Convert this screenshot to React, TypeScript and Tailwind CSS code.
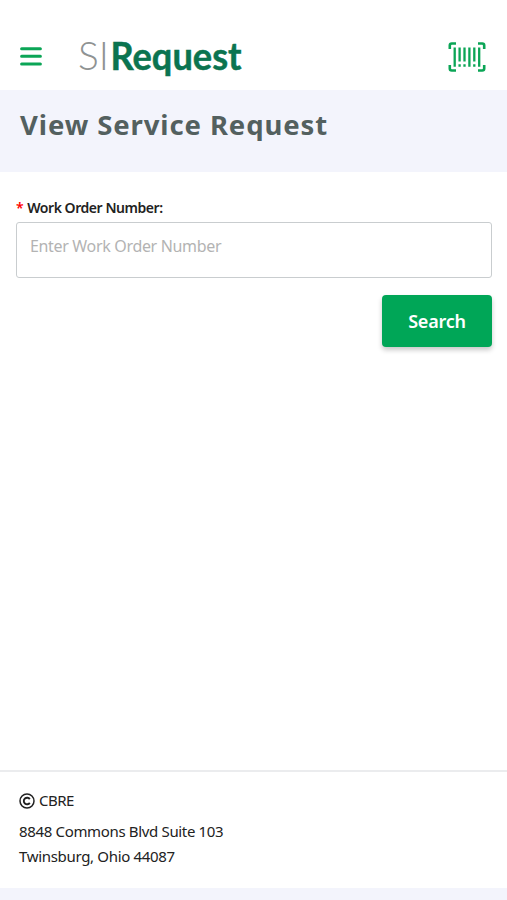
import React, { useState } from 'react';

const MenuIcon = () => (
  <svg width="22" height="20" viewBox="0 0 22 20" fill="none" stroke="#0ba556" strokeWidth="3" strokeLinecap="round">
    <path d="M1.6 1.7h18.8M1.6 9.3h18.8M1.6 17h18.8" />
  </svg>
);

const BarcodeIcon = () => (
  <svg width="38" height="30" viewBox="0 0 38 30" fill="none" stroke="#0ba556">
    <path strokeWidth="2.6" d="M1.8 7V3.5Q1.8 1.5 3.8 1.5H8M30 1.5h4.2Q36.2 1.5 36.2 3.5V7M1.8 23v3.5Q1.8 28.5 3.8 28.5H8M30 28.5h4.2Q36.2 28.5 36.2 26.5V23" />
    <path strokeWidth="2.3" d="M6.7 5.5v19.2M11.6 5.5v14M16.5 5.5v14M21.4 5.5v19.2M26.3 5.5v14M31.2 5.5v19.2M11.6 22.2v2.5M16.5 22.2v2.5M26.3 22.2v2.5" />
  </svg>
);

const Logo = () => (
  <svg width="180" height="64" viewBox="0 0 180 64" className="overflow-visible font-[Lato,sans-serif]">
    <text x="-1" y="44.5" fontSize="40" fontWeight="300" fill="#8f9393" textLength="31" lengthAdjust="spacingAndGlyphs">SI</text>
    <text x="31.5" y="44.5" fontSize="39" fontWeight="700" fill="#0b7450" stroke="#0b7450" strokeWidth="0.5" textLength="131" lengthAdjust="spacingAndGlyphs">Request</text>
  </svg>
);

const CopyrightIcon = () => (
  <svg width="16" height="16" viewBox="0 0 16 16" fill="none" stroke="#222">
    <circle cx="8" cy="8" r="7" strokeWidth="1.5" />
    <path strokeWidth="1.9" d="M10.8 6.1A3.3 3.3 0 1 0 10.8 9.9" />
  </svg>
);

const Header = () => (
  <header className="h-[90px] pt-[23px] pl-5 pr-[21px] flex items-center justify-between bg-white">
    <div className="flex items-center gap-[37px]">
      <button aria-label="Menu"><MenuIcon /></button>
      <Logo />
    </div>
    <button aria-label="Scan barcode"><BarcodeIcon /></button>
  </header>
);

const Footer = () => (
  <footer className="h-[118px] pt-4 pl-[19px] border-t-2 border-[#ebecee] bg-white text-[#222] text-[15px] leading-[25px]">
    <div className="flex items-center gap-1 mb-1.5">
      <CopyrightIcon />
      <span className="tracking-[-0.5px]">CBRE</span>
    </div>
    <p className="tracking-[-0.34px]">8848 Commons Blvd Suite 103</p>
    <p className="tracking-[-0.32px]">Twinsburg, Ohio 44087</p>
  </footer>
);

export default function App() {
  const [orderNumber, setOrderNumber] = useState('');

  return (
    <div className="h-[900px] flex flex-col bg-[#f3f4fc] font-['Noto_Sans',sans-serif]">
      <Header />
      <div className="h-[82px] pl-5 pt-[15px]">
        <h1 className="text-[27.5px] leading-10 font-bold text-[#53605f] tracking-[0.9px]">View Service Request</h1>
      </div>
      <main className="flex-1 bg-white pl-4 pr-[15px] pt-[26px]">
        <form onSubmit={(e) => e.preventDefault()} className="flex flex-col">
          <label htmlFor="order" className="text-[14px] leading-5 font-semibold text-[#222] tracking-[-0.45px]">
            <span className="text-[#f00] mr-1">*</span>
            Work Order Number:
          </label>
          <input
            id="order"
            value={orderNumber}
            onChange={(e) => setOrderNumber(e.target.value)}
            placeholder="Enter Work Order Number"
            className="mt-1 h-14 w-full rounded-[3px] border-[1.5px] border-[#c9cdcf] px-[13px] pb-2 text-[16px] tracking-[-0.33px] placeholder:text-[#b3b3b3] outline-none"
          />
          <button
            type="submit"
            className="mt-[17px] h-[52px] w-[110px] self-end rounded bg-[#00a657] text-white text-[18px] tracking-[-0.2px] font-semibold shadow-[0_3px_5px_rgba(0,0,0,0.22)]"
          >
            Search
          </button>
        </form>
      </main>
      <Footer />
      <div className="h-3" />
    </div>
  );
}
